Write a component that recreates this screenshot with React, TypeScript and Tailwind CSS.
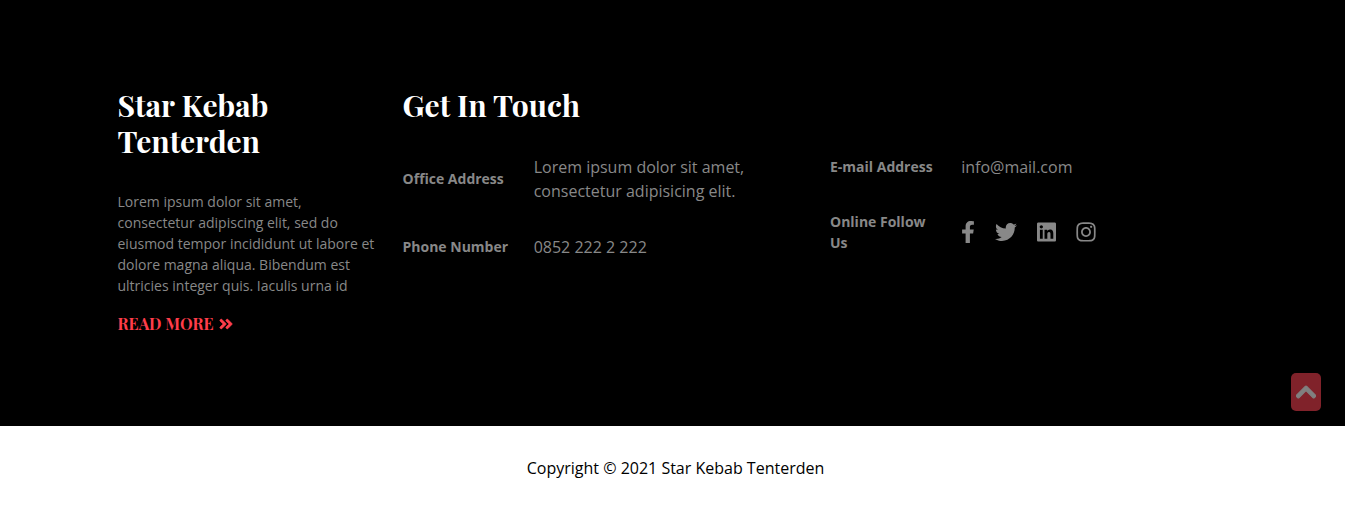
import type { ReactNode } from "react";
import {
  FaAngleDoubleRight,
  FaChevronUp,
  FaFacebookF,
  FaInstagram,
  FaLinkedin,
  FaTwitter,
} from "react-icons/fa";

const socials = [
  { label: "Facebook", icon: <FaFacebookF className="h-[22px] w-[14px]" /> },
  { label: "Twitter", icon: <FaTwitter className="size-[22px]" /> },
  { label: "LinkedIn", icon: <FaLinkedin className="h-[22px] w-[19px]" /> },
  { label: "Instagram", icon: <FaInstagram className="h-[22px] w-5" /> },
];

function Heading({ children }: { children: ReactNode }) {
  return (
    <h2 className="font-['Playfair_Display','Liberation_Serif',serif] text-[30px] leading-9 font-bold text-white">
      {children}
    </h2>
  );
}

function Contact({ label, children }: { label: string; children: ReactNode }) {
  return (
    <div className="grid grid-cols-[33%_1fr] items-center">
      <dt className="pr-5 pb-px text-sm leading-[21px] font-bold">{label}</dt>
      <dd>{children}</dd>
    </div>
  );
}

export default function App() {
  return (
    <div className="bg-white font-['Open_Sans',sans-serif] text-base text-[#888]">
      <footer className="relative bg-black pt-[87px] pb-[90px]">
        <div className="mx-auto grid max-w-[1140px] grid-cols-4">
          <section className="px-[15px]">
            <Heading>Star Kebab Tenterden</Heading>
            <p className="mt-8 -mr-1 text-sm leading-[21px]">
              Lorem ipsum dolor sit amet, consectetur adipiscing elit, sed do eiusmod tempor
              incididunt ut labore et dolore magna aliqua. Bibendum est ultricies integer quis.
              Iaculis urna id
            </p>
            <a
              href="#about"
              className="mt-4 inline-flex items-center gap-1 font-['Playfair_Display','Liberation_Serif',serif] text-base leading-6 font-bold text-[#ff3d4a] uppercase"
            >
              Read more
              <FaAngleDoubleRight className="size-4 stroke-current stroke-[16px]" />
            </a>
          </section>
          <section className="col-span-3 px-[15px]">
            <Heading>Get In Touch</Heading>
            <div className="mt-8 grid grid-cols-2 items-start gap-x-[30px]">
              <dl className="grid gap-8">
                <Contact label="Office Address">
                  <p className="max-w-60">Lorem ipsum dolor sit amet, consectetur adipisicing elit.</p>
                </Contact>
                <Contact label="Phone Number">0852 222 2 222</Contact>
              </dl>
              <dl className="grid gap-8">
                <Contact label="E-mail Address">
                  <a href="mailto:info@mail.com">info@mail.com</a>
                </Contact>
                <Contact label="Online Follow Us">
                  <ul className="flex items-center gap-5 pb-0.5">
                    {socials.map(({ label, icon }) => (
                      <li key={label}>
                        <a href={"#" + label.toLowerCase()} aria-label={label} className="block">
                          {icon}
                        </a>
                      </li>
                    ))}
                  </ul>
                </Contact>
              </dl>
            </div>
          </section>
        </div>
        <button
          type="button"
          aria-label="Back to top"
          className="absolute right-6 bottom-[15px] flex h-[38px] w-[30px] items-center justify-center rounded-[5px] bg-[#80222a] text-[#808080]"
        >
          <FaChevronUp className="h-6 w-5 stroke-current stroke-[24px]" />
        </button>
      </footer>
      <p className="py-[30px] pl-1.5 text-center text-black">Copyright © 2021 Star Kebab Tenterden</p>
    </div>
  );
}
